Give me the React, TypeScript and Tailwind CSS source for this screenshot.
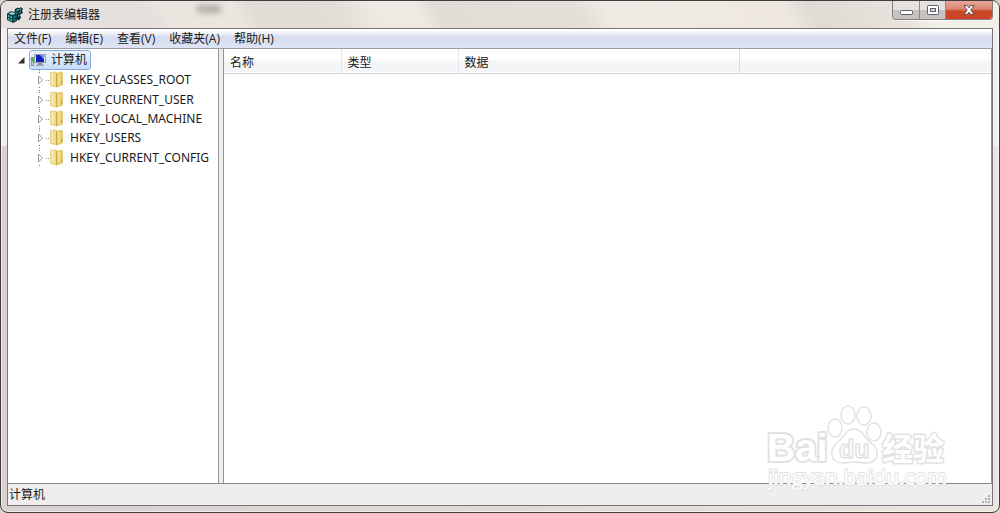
const menus = ["文件(F)", "编辑(E)", "查看(V)", "收藏夹(A)", "帮助(H)"];

const keys = [
  "HKEY_CLASSES_ROOT",
  "HKEY_CURRENT_USER",
  "HKEY_LOCAL_MACHINE",
  "HKEY_USERS",
  "HKEY_CURRENT_CONFIG",
];

function RegeditIcon() {
  return (
    <svg width="16" height="16" viewBox="0 0 16 16" aria-hidden="true">
      <path d="M0 6.500l4-2.500 6 2v8l-4 2-6-3z" fill="#103f42" />
      <path d="M1.500 6.500L4.500 5l4 1.500-3 1.500z" fill="#8fdcd9" />
      <path d="M1 8l1.500.6v1.800L1 9.800zM3.500 9l1.500.6v1.800l-1.500-.6zM1 11l1.500.6v1.600L1 12.600zM3.500 12l1.500.6v1.800l-1.500-.6z" fill="#4fc4c1" />
      <path d="M6.500 9.500l2-.8v1.800l-2 .8zM6.500 12.500l2-.8v1.600l-2 .8z" fill="#1f8583" />
      <path d="M8 2l3-1.500 1 1L14 0l2 2-1 2 1 2-3 1.500 1 3-2 3-2-1V7L7.500 5z" fill="#0a2a2c" />
      <path d="M9 3l2-1 1 1-2 1.200zM13 1.500l1.500.7-1 1.200-1.200-.7z" fill="#59c9c5" />
      <path d="M9 5l1.500.6V7L9 6.300zM12 5l1.800-.7v1.200L12 6.200zM11 8l1.500-.5v1.800l-1.500.6z" fill="#2fa19e" />
    </svg>
  );
}

function ComputerIcon() {
  return (
    <svg width="17" height="16" viewBox="0 0 17 16" aria-hidden="true">
      <path d="M0 7.500h2" stroke="#8b8b8b" strokeDasharray="1 1" />
      <rect x="1.500" y="5.500" width="2" height="8" fill="#c9d0d3" stroke="#8d979b" />
      <path d="M2 6h1.500v4H2z" fill="#48b93f" />
      <rect x="4.500" y="2.500" width="11" height="8" fill="#d9dde4" stroke="#9aa0ab" />
      <rect x="6" y="3" width="8" height="7" fill="#1120b8" />
      <path d="M10 3h4v5z" fill="#6d8cf0" />
      <path d="M8 11h4l1 2H7z" fill="#8f959d" />
      <path d="M6 13.500h8" stroke="#a5aab2" />
    </svg>
  );
}

function FolderIcon() {
  return (
    <svg width="14" height="17" viewBox="0 0 14 17" aria-hidden="true">
      <path d="M.5 1.500L6 1l1 1v14L.5 14.500z" fill="#f0dc8c" stroke="#dcc668" strokeWidth=".7" />
      <path d="M6.500 2.500l5-1.500 1 1v12l-6 2z" fill="#e8d078" stroke="#d3b95a" strokeWidth=".7" />
      <path d="M2.500 2v12" stroke="#f9eeb8" strokeWidth="1.500" />
      <path d="M6.500 2.500V16" stroke="#c9ab45" />
      <path d="M9 3v11" stroke="#f3e3a0" strokeWidth="1.500" />
      <path d="M11.500 10v3" stroke="#7fb2a8" />
    </svg>
  );
}

function Branch() {
  return (
    <svg width="14" height="19" viewBox="0 0 14 19" aria-hidden="true">
      <path d="M3.500 0v3M3.500 17v2" stroke="#7a7a7a" strokeDasharray="1 1" />
      <path d="M2.500 6v8l4-4z" fill="#fff" stroke="#999" />
      <path d="M10 10.500h4" stroke="#8b8b8b" strokeDasharray="1 1" />
    </svg>
  );
}

function TitleBar() {
  return (
    <header className="relative flex h-[27px] items-start justify-between rounded-t-[7px] bg-[linear-gradient(60deg,#e6e1df_0%,#e4dedd_15%,#ebe5e0_17%,#ebe6df_24%,#e0dbd5_26%,#e3ddd7_34%,#efe9e3_38%,#efe9e3_42%,#e2dcd7_44%,#e5dfda_58%,#f0eae4_61%,#eee8e1_78%,#dfdbd4_81%,#e8e3dc_90%,#f2eee8_92%)] pl-1.5 pr-1.5">
      <div className="absolute left-[196px] top-1 h-2 w-6 bg-[#77706e] opacity-50 blur-[3px]" />
      <div className="flex h-[27px] items-center gap-[5px]">
        <RegeditIcon />
        <h1 className="text-xs">注册表编辑器</h1>
      </div>
      <div className="flex h-[19px] overflow-hidden rounded-b-[4px] border border-t-0 border-[#817e7b] shadow-[0_1px_0_#ffffffb0]">
        <button
          aria-label="最小化"
          className="flex w-[27px] items-center justify-center border-r border-[#8d8986] bg-linear-to-b from-[#e5e1de] from-50% to-[#c6c2c0] to-50%"
        >
          <svg width="13" height="7" viewBox="0 0 13 7" className="mt-1">
            <rect x=".5" y="1.500" width="12" height="4" rx="1" fill="#fff" stroke="#5d6070" />
          </svg>
        </button>
        <button
          aria-label="最大化"
          className="flex w-[26px] items-center justify-center border-r border-[#8d8986] bg-linear-to-b from-[#e5e1de] from-50% to-[#c6c2c0] to-50%"
        >
          <svg width="12" height="10" viewBox="0 0 12 10">
            <rect x=".5" y=".5" width="11" height="9" rx="1" fill="#fff" stroke="#5d6070" />
            <rect x="3.500" y="3.500" width="5" height="3" fill="#d5d2d0" stroke="#5d6070" />
          </svg>
        </button>
        <button
          aria-label="关闭"
          className="flex w-[46px] items-center justify-center bg-linear-to-b from-[#e9a798] via-[#d98572] via-45% to-[#cc4526] to-55%"
        >
          <svg width="12" height="10" viewBox="0 0 12 10">
            <path d="M1 .5h3l2 2.300L8 .5h3L7.800 5 11 9.500H8L6 7.200 4 9.500H1L4.200 5z" fill="#fff" stroke="#5f4f58" />
          </svg>
        </button>
      </div>
    </header>
  );
}

function KeyTree() {
  return (
    <nav className="w-[211px] shrink-0 border-r border-[#8e939c] bg-white pt-px">
      <div className="flex h-5 items-center pl-2.5">
        <svg width="7" height="7" viewBox="0 0 7 7" className="mr-1" aria-hidden="true">
          <path d="M6.500 0v6.500H0z" fill="#333" />
        </svg>
        <button className="flex h-5 items-center gap-1 rounded-[3px] border border-[#84acdd] bg-linear-to-b from-[#e9f2fd] to-[#c5dcfa] pr-[3px] text-xs">
          <ComputerIcon />
          计算机
        </button>
      </div>
      <ul className="grid h-[97px] auto-rows-fr">
        {keys.map((key) => (
          <li key={key} className="flex items-center pl-7">
            <button className="flex items-center font-['Noto_Sans',sans-serif] text-xs leading-[19px]">
              <Branch />
              <FolderIcon />
              <span className="ml-1.5">{key}</span>
            </button>
          </li>
        ))}
      </ul>
    </nav>
  );
}

function ValueList() {
  return (
    <main className="min-w-0 flex-1 border-x border-[#8e939c] bg-white">
      <table className="w-full table-fixed text-left text-xs">
        <colgroup>
          <col className="w-[117px]" />
          <col className="w-[117px]" />
          <col className="w-[281px]" />
          <col />
        </colgroup>
        <thead>
          <tr className="h-6 border-b border-[#d5d5d5] bg-linear-to-b from-white from-45% to-[#f4f5f6] to-55%">
            <th className="border-r border-[#e3e6ea] px-1.5 pt-1 font-normal">名称</th>
            <th className="border-r border-[#e3e6ea] px-1.5 pt-1 font-normal">类型</th>
            <th className="border-r border-[#d9dcdf] px-1.5 pt-1 font-normal">数据</th>
            <td />
          </tr>
        </thead>
      </table>
    </main>
  );
}

function Watermark() {
  return (
    <svg
      width="184"
      height="90"
      viewBox="0 0 184 90"
      className="pointer-events-none absolute bottom-[18px] right-[50px]"
      fill="#fff"
      stroke="#e2e2e2"
      strokeWidth="2"
      strokeLinejoin="round"
      aria-hidden="true"
    >
      <g fontFamily="Liberation Sans, Noto Sans CJK SC, sans-serif" fontWeight="700" paintOrder="stroke">
        <text x="2" y="57" fontSize="39" strokeWidth="4">Bai</text>
        <text x="117" y="56" fontSize="31" strokeWidth="3">经验</text>
      </g>
      <g strokeWidth="1.500">
        <ellipse cx="70" cy="24" rx="7" ry="9" />
        <ellipse cx="83" cy="11" rx="7" ry="9" />
        <ellipse cx="99" cy="12" rx="7" ry="9" />
        <ellipse cx="109" cy="28" rx="7" ry="9" />
        <path d="M89 25c-8 0-10 8-16 13-5 4-7 8-6 13 1 6 6 8 11 8 4 0 7-1 11-1s8 1 12 1c6 0 10-3 11-8 1-6-2-9-7-13-6-5-8-13-16-13z" />
      </g>
      <text x="74" y="54" fontSize="25" fontFamily="Liberation Sans, sans-serif" fontWeight="700" strokeWidth="1.500">
        du
      </text>
      <text x="3" y="81" fontSize="21" fontFamily="Open Sans, sans-serif" paintOrder="stroke">
        jingyan.baidu.com
      </text>
    </svg>
  );
}

export default function App() {
  return (
    <div className="h-screen bg-[#d6d2cf] font-['Open_Sans','Noto_Sans_CJK_SC',sans-serif] text-[#1a1a1a]">
      <div className="relative flex h-full flex-col rounded-lg border border-[#3f3d3d] bg-[linear-gradient(#f5f2efe0_145px,#0000_145px),linear-gradient(90deg,#d9d0cf,#ded8d5_40%,#ebe5dd)] shadow-[inset_0_0_0_1px_#ffffff90]">
        <TitleBar />
        <div className="mx-1.5 mb-1.5 flex min-h-0 flex-1 flex-col border border-[#75777c] bg-[#f0eded]">
          <div className="flex h-5 shrink-0 items-center gap-3.5 border-b border-[#9b9da8] bg-linear-to-b from-white from-5% via-[#d7ddee] via-45% to-[#dfe4f4] pl-1.5 text-xs">
            {menus.map((menu) => (
              <button key={menu}>{menu}</button>
            ))}
          </div>
          <div className="flex min-h-0 flex-1 gap-1 border-b border-[#828790]">
            <KeyTree />
            <ValueList />
          </div>
          <footer className="flex h-[21px] shrink-0 items-center justify-between pl-px text-xs">
            <span>计算机</span>
            <svg width="12" height="12" viewBox="0 0 12 12" className="self-end" fill="#b5b1b1" aria-hidden="true">
              <path d="M8 2h2v2H8zM5 5h2v2H5zM8 5h2v2H8zM2 8h2v2H2zM5 8h2v2H5zM8 8h2v2H8z" />
            </svg>
          </footer>
        </div>
        <Watermark />
      </div>
    </div>
  );
}
